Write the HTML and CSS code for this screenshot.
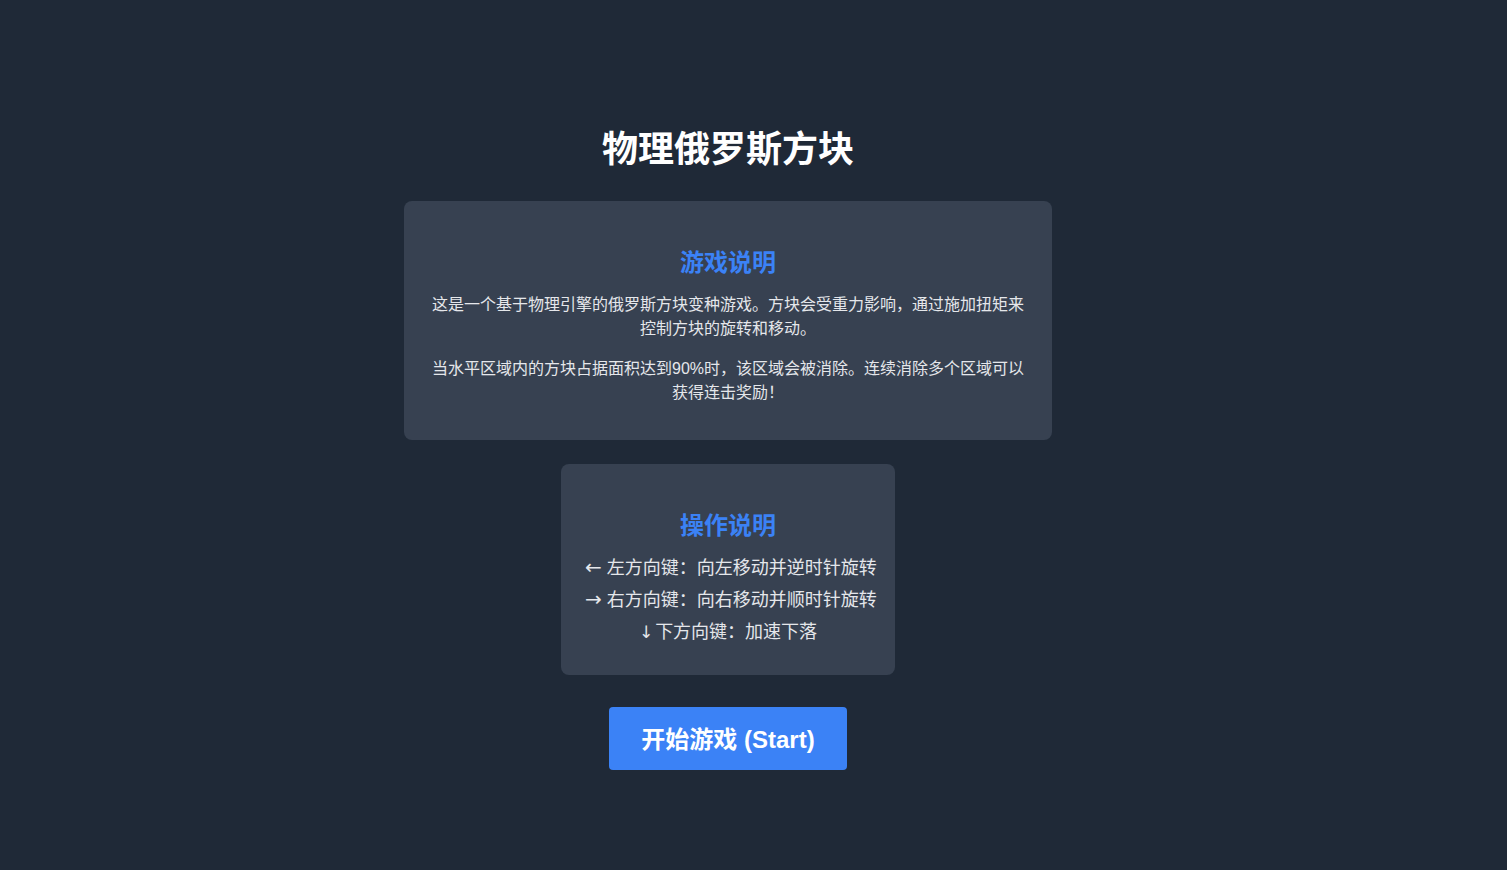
FILE: index.html
```html
<!DOCTYPE html>
<html lang="zh-CN">
<head>
<meta charset="utf-8">
<title>物理俄罗斯方块</title>
<link rel="stylesheet" href="styles.css">
</head>
<body>
<main class="page">
  <h1 class="title">物理俄罗斯方块</h1>
  <section class="card card-intro">
    <h2 class="card-title">游戏说明</h2>
    <p class="card-text">这是一个基于物理引擎的俄罗斯方块变种游戏。方块会受重力影响，通过施加扭矩来控制方块的旋转和移动。</p>
    <p class="card-text">当水平区域内的方块占据面积达到90%时，该区域会被消除。连续消除多个区域可以获得连击奖励！</p>
  </section>
  <section class="card card-controls">
    <h2 class="card-title">操作说明</h2>
    <ul class="controls">
      <li><span class="arrow">←</span> 左方向键：向左移动并逆时针旋转</li>
      <li><span class="arrow">→</span> 右方向键：向右移动并顺时针旋转</li>
      <li><span class="arrow arrow-down">↓</span>下方向键：加速下落</li>
    </ul>
  </section>
  <button class="start-btn" type="button">开始游戏 (Start)</button>
</main>
</body>
</html>
```

FILE: styles.css
```css
html, body {
  margin: 0;
  padding: 0;
}

body {
  background: #1f2937;
  color: #e5e7eb;
  font-family: "Liberation Sans", "Noto Sans CJK SC", sans-serif;
  min-height: 870px;
}

.page {
  display: flex;
  flex-direction: column;
  align-items: center;
  padding: 130px 51px 0 0;
}

.title {
  margin: 0 0 31px;
  font-size: 36px;
  line-height: 40px;
  font-weight: 700;
  color: #ffffff;
}

.card {
  background: #374151;
  border-radius: 8px;
  box-sizing: border-box;
  text-align: center;
  padding: 25px 24px 27px;
}

.card-intro {
  width: 648px;
  padding-bottom: 23px;
}

.card-controls {
  margin-top: 24px;
  width: 334px;
}

.card-title {
  margin: 23px 0 16px;
  font-size: 24px;
  line-height: 28px;
  height: 28px;
  font-weight: 700;
  color: #3b82f6;
}

.card-text {
  margin: 0 0 16px;
  font-size: 16px;
  line-height: 24px;
}

.card-text:last-child {
  margin-bottom: 12px;
}

.card-controls .card-title {
  margin-bottom: 12px;
}

.controls {
  list-style: none;
  margin: 0;
  padding: 0;
  font-size: 18px;
  line-height: 32px;
  white-space: nowrap;
}

.controls li {
  height: 32px;
}

.arrow {
  font-family: "DejaVu Sans", sans-serif;
  font-size: 20px;
  line-height: 20px;
}

.arrow-down {
  font-size: 17px;
  margin-right: 2px;
}

.start-btn {
  margin-top: 32px;
  width: 238px;
  height: 63px;
  border: none;
  border-radius: 4px;
  background: #3b82f6;
  color: #ffffff;
  font-family: "Liberation Sans", "Noto Sans CJK SC", sans-serif;
  font-size: 24px;
  font-weight: 700;
  line-height: 32px;
  padding: 2px 0 0;
  cursor: pointer;
}
```
